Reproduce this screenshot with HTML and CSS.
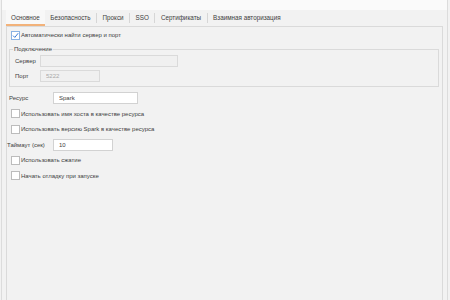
FILE: index.html
```html
<!DOCTYPE html>
<html lang="ru">
<head>
    <meta charset="UTF-8">
    <meta name="viewport" content="width=device-width, initial-scale=1.0">
    <title>Настройки входа</title>
    <link rel="stylesheet" href="styles.css">
</head>
<body>
    <div class="frame">
        <div class="tabs">
            <div class="tab active">Основное</div>
            <div class="tab">Безопасность</div>
            <span class="sep"></span>
            <div class="tab">Прокси</div>
            <span class="sep"></span>
            <div class="tab">SSO</div>
            <span class="sep"></span>
            <div class="tab">Сертификаты</div>
            <span class="sep"></span>
            <div class="tab">Взаимная авторизация</div>
        </div>

        <div class="panel">
            <label class="check first">
                <span class="box checked">
                    <svg viewBox="0 0 9 9" width="9" height="9"><path d="M2 4.6 L3.8 6.4 L7.2 2.2" fill="none" stroke="#3b7bd6" stroke-width="1"/></svg>
                </span>
                Автоматически найти сервер и порт
            </label>

            <fieldset class="group">
                <legend>Подключение</legend>
                <div class="field">
                    <span class="label">Сервер</span>
                    <input class="input wide" type="text" disabled>
                </div>
                <div class="field">
                    <span class="label">Порт</span>
                    <input class="input short" type="text" value="5222" disabled>
                </div>
            </fieldset>

            <div class="options">
                <div class="field main">
                    <span class="label">Ресурс</span>
                    <input class="input medium" type="text" value="Spark">
                </div>
                <label class="check"><span class="box"></span>Использовать имя хоста в качестве ресурса</label>
                <label class="check"><span class="box"></span>Использовать версию Spark в качестве ресурса</label>
                <div class="field main timeout">
                    <span class="label">Таймаут (сек)</span>
                    <input class="input short" type="text" value="10">
                </div>
                <label class="check"><span class="box"></span>Использовать сжатие</label>
                <label class="check"><span class="box"></span>Начать отладку при запуске</label>
            </div>
        </div>
    </div>
</body>
</html>
```

FILE: styles.css
```css
html, body {
    margin: 0;
    height: 300px;
    overflow: hidden;
}
body {
    font-family: 'Liberation Sans', Arial, sans-serif;
    font-size: 6px;
    color: #404040;
    background-color: #f2f2f2;
}
.frame {
    height: 300px;
    margin: 0 2px 0 1px;
    border-left: 1px solid #dcdcdc;
    border-right: 1px solid #dcdcdc;
    padding-top: 10px;
    box-sizing: border-box;
    display: flex;
    flex-direction: column;
    background: linear-gradient(#fafafa 0, #fafafa 10px, #f2f2f2 10px);
}
.tabs {
    display: flex;
    align-items: center;
    height: 16px;
    margin-left: 4px;
    font-size: 6.3px;
}
.tab {
    height: 16px;
    line-height: 15px;
    padding: 0 5.5px;
    box-sizing: border-box;
}
.tab.active {
    background-color: #f8f8f8;
    border-bottom: 2px solid #f2b27a;
    padding: 0 5px;
}
.sep {
    width: 1px;
    height: 10px;
    background-color: #d6d6d6;
}
.panel {
    flex: 1;
    margin: 0 4px;
    border: 1px solid #dadada;
    border-bottom: none;
    padding: 1px 0 0;
}
.check {
    display: flex;
    align-items: center;
    height: 12px;
    padding-left: 4px;
}
.check.first {
    margin-top: 1px;
}
.box {
    width: 9px;
    height: 9px;
    box-sizing: border-box;
    border: 1px solid #bcbcbc;
    background-color: #fff;
    margin-right: 1px;
    flex-shrink: 0;
    display: flex;
}
.box.checked {
    border-color: #8ab2e3;
}
.box svg {
    margin: -1px;
}
.group {
    margin: 4px 3px 0 2px;
    padding: 2px 4px 4px 5px;
    border: 1px solid #dadada;
    min-width: 0;
}
.group legend {
    padding: 0 1px;
    margin-left: -2px;
    line-height: 8px;
}
.field {
    display: flex;
    align-items: center;
    height: 12px;
}
.group .field + .field {
    margin-top: 3px;
}
.group .label {
    width: 25px;
}
.input {
    height: 12px;
    box-sizing: border-box;
    border: 1px solid #d2d2d2;
    background-color: #fff;
    font-family: inherit;
    font-size: 6px;
    color: #404040;
    padding: 0 5px;
    margin: 0;
    outline: none;
}
.input:disabled {
    background-color: #f0f0f0;
    border-color: #dadada;
    color: #a8a8a8;
}
.wide {
    width: 138px;
}
.short {
    width: 60px;
}
.medium {
    width: 85px;
}
.options {
    display: flex;
    flex-direction: column;
    gap: 3.5px;
    margin-top: 5px;
}
.field.main {
    padding-left: 2px;
}
.field.main .label {
    width: 44px;
}
.field.timeout {
    padding-left: 0;
}
.field.timeout .label {
    width: 46px;
}
```
